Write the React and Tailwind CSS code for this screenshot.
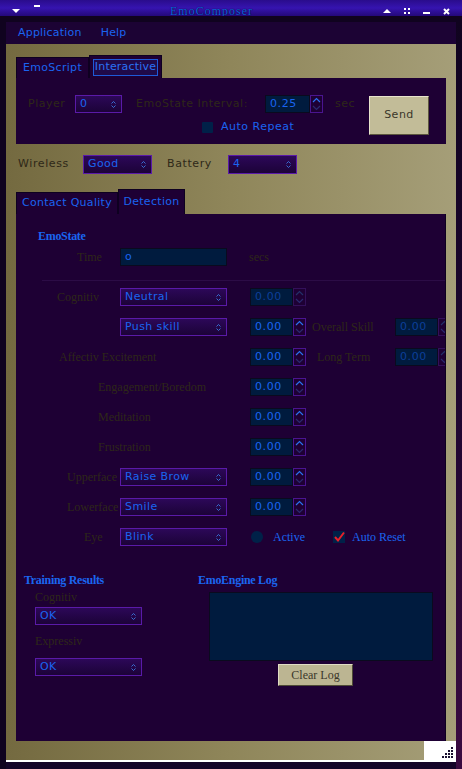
import React from 'react';

const SANS = { fontFamily: '"DejaVu Sans", Verdana, sans-serif' };
const SERIF = { fontFamily: '"Liberation Serif", "DejaVu Serif", serif' };

function Combo({ value, w = 'w-[107px]', h = 'h-[18px]' }) {
  return (
    <div
      className={`${w} ${h} shrink-0 border border-[#5a1aa8] bg-gradient-to-b from-[#2c0858] to-[#1c0338] flex items-center justify-between pl-[4px] pr-[5px] text-[11px] text-[#1a64f0] tracking-[0.4px]`}
      style={SANS}
    >
      <span>{value}</span>
      <svg width="5" height="7" viewBox="0 0 5 7">
        <path d="M0.5 2.5 L2.5 0.5 L4.5 2.5 M0.5 4.5 L2.5 6.5 L4.5 4.5" stroke="#3a78e0" strokeWidth="0.9" fill="none" />
      </svg>
    </div>
  );
}

function Spin({ value, w = 'w-[44px]', dim = false }) {
  return (
    <div className="flex shrink-0 h-[18px]">
      <div
        className={`${w} h-full bg-[#001b3e] border border-[#0a0a1e] flex items-center pl-[4px] text-[11px] tracking-[0.6px] ${dim ? 'text-[#0c3f9a]' : 'text-[#1a64f0]'}`}
        style={SANS}
      >
        {value}
      </div>
      <div className={`w-[13px] h-full border ${dim ? 'border-[#33105a]' : 'border-[#4a1490]'} flex flex-col items-center justify-between py-[1px]`}>
        <svg width="9" height="6" viewBox="0 0 9 6">
          <path d="M1 5 L4.5 1.5 L8 5" stroke={dim ? '#23306a' : '#2a70f0'} strokeWidth="1.2" fill="none" />
        </svg>
        <svg width="9" height="6" viewBox="0 0 9 6">
          <path d="M1 1 L4.5 4.5 L8 1" stroke="#2a2a70" strokeWidth="1.2" fill="none" />
        </svg>
      </div>
    </div>
  );
}

function Label({ children, className = '' }) {
  return (
    <span className={`shrink-0 text-[12px] text-[#2e2818] ${className}`} style={SERIF}>
      {children}
    </span>
  );
}

function Row({ children }) {
  return <div className="h-[30px] flex items-center overflow-hidden">{children}</div>;
}

export default function App() {
  return (
    <div className="w-[462px] h-[769px] overflow-hidden bg-[#140428] flex flex-col">
      {/* title bar */}
      <div className="h-[16px] shrink-0 bg-gradient-to-b from-[#2a0c8c] via-[#3614b0] to-[#24087a] flex items-center px-[12px]">
        <svg width="8" height="4" viewBox="0 0 8 4" className="mt-[5px]">
          <path d="M0 0 H8 L4 4 Z" fill="#fff" />
        </svg>
        <div className="w-[6px] h-[2px] bg-white ml-[14px] -mt-[4px]" />
        <div
          className="flex-1 text-center text-[12px] tracking-[1px] text-[#1060e0] mt-[6px]"
          style={{ ...SERIF, textShadow: '0 0 1px #000' }}
        >
          EmoComposer
        </div>
        <div className="flex items-center gap-[13px] mt-[6px]">
          <svg width="8" height="4" viewBox="0 0 8 4">
            <path d="M0 4 H8 L4 0 Z" fill="#fff" />
          </svg>
          <svg width="6" height="6" viewBox="0 0 6 6">
            <rect x="0" y="0" width="2" height="2" fill="#fff" />
            <rect x="4" y="0" width="2" height="2" fill="#fff" />
            <rect x="0" y="4" width="2" height="2" fill="#fff" />
            <rect x="4" y="4" width="2" height="2" fill="#fff" />
          </svg>
          <div className="w-[7px] h-[2px] bg-white mt-[4px]" />
          <svg width="7" height="7" viewBox="0 0 7 7">
            <path d="M1 1 L6 6 M6 1 L1 6" stroke="#fff" strokeWidth="2" />
          </svg>
        </div>
      </div>
      <div className="h-[6px] shrink-0 bg-[#10031f]" />

      {/* body with side frames */}
      <div className="flex flex-1 min-h-0">
        <div className="w-[6px] shrink-0 bg-[#10031f]" />
        <div className="flex-1 flex flex-col min-w-0">
          {/* menu */}
          <div className="h-[22px] shrink-0 bg-[#1c0334] flex items-center gap-[19px] pl-[12px] text-[11px] text-[#1a64f0] tracking-[0.2px]" style={SANS}>
            <span>Application</span>
            <span>Help</span>
          </div>

          {/* olive area */}
          <div className="flex-1 flex flex-col bg-gradient-to-r from-[#746a40] via-[#8f865a] to-[#a59e78] px-[10px] pt-[11px]">
            {/* top tabs */}
            <div className="flex items-end h-[23px]">
              <div className="w-[73px] h-[21px] bg-[#1e0034] border border-[#0e0020] border-b-0 flex items-center justify-center text-[11px] text-[#1a64f0] tracking-[0.3px]" style={SANS}>
                EmoScript
              </div>
              <div className="w-[73px] h-[23px] bg-[#1e0034] border border-[#0e0020] border-b-0 flex items-center justify-center">
                <div className="w-[65px] h-[17px] border border-[#1e5ad8] bg-[#200a48] flex items-center justify-center text-[11px] text-[#2a72f4] tracking-[0.2px]" style={SANS}>
                  Interactive
                </div>
              </div>
            </div>
            {/* interactive panel */}
            <div className="h-[66px] bg-[#1e0034] flex">
              <div className="flex flex-col pt-[17px] pl-[12px]">
                <div className="flex items-center h-[18px]">
                  <span className="text-[11px] text-[#2e2818] tracking-[0.5px] w-[47px]" style={SANS}>Player</span>
                  <Combo value="0" w="w-[47px]" />
                  <span className="text-[11px] text-[#2e2818] tracking-[0.5px] ml-[14px] w-[129px]" style={SANS}>EmoState Interval:</span>
                  <Spin value="0.25" w="w-[45px]" />
                  <span className="text-[11px] text-[#2e2818] tracking-[0.5px] ml-[12px]" style={SANS}>sec</span>
                </div>
                <div className="flex items-center h-[12px] mt-[8px] pl-[174px]">
                  <div className="w-[11px] h-[11px] bg-[#002148] rounded-[1px]" />
                  <span className="ml-[8px] text-[11px] text-[#1a64f0] tracking-[0.5px]" style={SANS}>Auto Repeat</span>
                </div>
              </div>
              <div className="ml-auto mr-[17px] mt-[18px] w-[60px] h-[39px] bg-[#c2bc98] border border-t-[#e8e4cc] border-l-[#e8e4cc] border-r-[#5c563e] border-b-[#5c563e] flex items-center justify-center text-[11px] text-[#3a372a] tracking-[0.5px]" style={SANS}>
                Send
              </div>
            </div>

            {/* wireless row */}
            <div className="flex items-center h-[19px] mt-[11px]">
              <span className="text-[11px] text-[#2e2818] tracking-[0.6px] ml-[2px] w-[65px]" style={SANS}>Wireless</span>
              <Combo value="Good" w="w-[69px]" h="h-[19px]" />
              <span className="text-[11px] text-[#2e2818] tracking-[0.6px] ml-[15px] w-[61px]" style={SANS}>Battery</span>
              <Combo value="4" w="w-[69px]" h="h-[19px]" />
            </div>

            {/* detection tabs */}
            <div className="flex items-end h-[26px] mt-[14px]">
              <div className="w-[102px] h-[22px] bg-[#1e0034] border border-[#0e0020] border-b-0 flex items-center justify-center text-[11px] text-[#1a64f0] tracking-[0.3px]" style={SANS}>
                Contact Quality
              </div>
              <div className="w-[67px] h-[25px] bg-[#1e0034] border border-[#0e0020] border-b-0 flex items-center justify-center text-[11px] text-[#1a64f0] tracking-[0.3px]" style={SANS}>
                Detection
              </div>
            </div>

            {/* detection panel */}
            <div className="h-[527px] bg-[#1e0034] border-r border-[#0e0020] flex flex-col">
              <div className="h-[14px] mt-[13px] pl-[22px] text-[12px] font-bold text-[#1a66f0] tracking-[-0.3px]" style={SERIF}>
                EmoState
              </div>
              <div className="h-[18px] mt-[7px] flex items-center">
                <Label className="pl-[61px] w-[104px]">Time</Label>
                <div className="w-[107px] h-[18px] shrink-0 bg-[#001b3e] border border-[#0a0a1e] flex items-center pl-[4px] text-[11px] text-[#1a64f0]" style={SANS}>o</div>
                <Label className="ml-[22px]">secs</Label>
              </div>
              <div className="h-px bg-[#2c0c46] mt-[14px] ml-[26px]" />
              <div className="h-[1px]" />

              <Row>
                <Label className="pl-[41px] w-[104px]">Cognitiv</Label>
                <Combo value="Neutral" />
                <div className="ml-[23px] shrink-0"><Spin value="0.00" w="w-[43px]" dim /></div>
              </Row>
              <Row>
                <div className="w-[104px] shrink-0" />
                <Combo value="Push skill" />
                <div className="ml-[23px] shrink-0"><Spin value="0.00" w="w-[43px]" /></div>
                <Label className="ml-[6px] w-[83px]">Overall Skill</Label>
                <Spin value="0.00" w="w-[43px]" dim />
              </Row>
              <Row>
                <Label className="pl-[43px] w-[234px]">Affectiv Excitement</Label>
                <Spin value="0.00" w="w-[43px]" />
                <Label className="ml-[11px] w-[78px]">Long Term</Label>
                <Spin value="0.00" w="w-[43px]" dim />
              </Row>
              <Row>
                <Label className="pl-[82px] w-[234px]">Engagement/Boredom</Label>
                <Spin value="0.00" w="w-[43px]" />
              </Row>
              <Row>
                <Label className="pl-[82px] w-[234px]">Meditation</Label>
                <Spin value="0.00" w="w-[43px]" />
              </Row>
              <Row>
                <Label className="pl-[82px] w-[234px]">Frustration</Label>
                <Spin value="0.00" w="w-[43px]" />
              </Row>
              <Row>
                <Label className="pl-[51px] w-[104px]">Upperface</Label>
                <Combo value="Raise Brow" />
                <div className="ml-[23px] shrink-0"><Spin value="0.00" w="w-[43px]" /></div>
              </Row>
              <Row>
                <Label className="pl-[51px] w-[104px]">Lowerface</Label>
                <Combo value="Smile" />
                <div className="ml-[23px] shrink-0"><Spin value="0.00" w="w-[43px]" /></div>
              </Row>
              <Row>
                <Label className="pl-[68px] w-[104px]">Eye</Label>
                <Combo value="Blink" />
                <div className="ml-[24px] w-[12px] h-[12px] shrink-0 rounded-full bg-[#002148]" />
                <span className="ml-[10px] shrink-0 text-[12px] text-[#1a64f0] w-[60px]" style={SERIF}>Active</span>
                <div className="w-[12px] h-[12px] shrink-0 bg-[#002148] flex items-center justify-center">
                  <svg width="12" height="12" viewBox="0 0 12 12">
                    <path d="M2 6 L5 9.5 L11 1.5" stroke="#e8202a" strokeWidth="2" fill="none" />
                  </svg>
                </div>
                <span className="ml-[7px] shrink-0 text-[12px] text-[#1a64f0]" style={SERIF}>Auto Reset</span>
              </Row>

              <div className="flex mt-[19px]">
                <div className="w-[182px] pl-[8px] flex flex-col">
                  <div className="h-[14px] text-[12px] font-bold text-[#1a66f0] tracking-[-0.3px]" style={SERIF}>Training Results</div>
                  <Label className="ml-[11px] mt-[5px] leading-[14px]">Cognitiv</Label>
                  <div className="ml-[11px] mt-[3px]"><Combo value="OK" /></div>
                  <Label className="ml-[11px] mt-[9px] leading-[14px]">Expressiv</Label>
                  <div className="ml-[11px] mt-[10px]"><Combo value="OK" /></div>
                </div>
                <div className="flex flex-col">
                  <div className="h-[14px] text-[12px] font-bold text-[#1a66f0] tracking-[-0.3px]" style={SERIF}>EmoEngine Log</div>
                  <div className="ml-[11px] mt-[7px] w-[224px] h-[69px] bg-[#001b3e] border border-[#0a0a1e]" />
                  <div className="ml-[80px] mt-[3px] w-[75px] h-[22px] bg-[#bcb592] border border-t-[#e0dcc4] border-l-[#e0dcc4] border-r-[#4e4a36] border-b-[#4e4a36] flex items-center justify-center text-[12px] text-[#3a372a]" style={SERIF}>
                    Clear Log
                  </div>
                </div>
              </div>
            </div>

            {/* bottom strip */}
            <div className="h-[19px] flex -mx-[10px]">
              <div className="flex-1" />
              <div className="w-[32px] h-full bg-white flex items-end justify-end pr-[3px] pb-[2px]">
                <svg width="11" height="11" viewBox="0 0 11 11">
                  <rect x="9" y="0" width="2" height="2" fill="#1a1030" />
                  <rect x="6" y="3" width="2" height="2" fill="#1a1030" />
                  <rect x="9" y="3" width="2" height="2" fill="#1a1030" />
                  <rect x="3" y="6" width="2" height="2" fill="#1a1030" />
                  <rect x="6" y="6" width="2" height="2" fill="#1a1030" />
                  <rect x="9" y="6" width="2" height="2" fill="#1a1030" />
                  <rect x="0" y="9" width="2" height="2" fill="#1a1030" />
                  <rect x="3" y="9" width="2" height="2" fill="#1a1030" />
                  <rect x="6" y="9" width="2" height="2" fill="#1a1030" />
                  <rect x="9" y="9" width="2" height="2" fill="#1a1030" />
                </svg>
              </div>
            </div>
          </div>
          <div className="h-[2px] shrink-0 bg-white" />
          <div className="h-[7px] shrink-0 bg-[#140428]" />
        </div>
        <div className="w-[6px] shrink-0 bg-gradient-to-b from-[#10031f] via-[#1e0630] to-[#3a0a40]" />
      </div>
    </div>
  );
}
